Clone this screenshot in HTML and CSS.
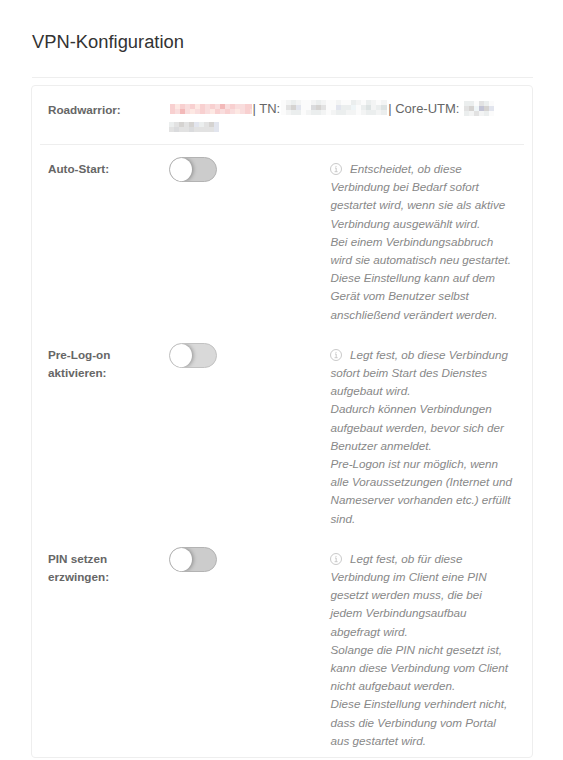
FILE: index.html
```html
<!DOCTYPE html>
<html lang="de">
<head>
<meta charset="UTF-8">
<meta name="viewport" content="width=device-width, initial-scale=1.0">
<title>VPN-Konfiguration</title>
<link rel="stylesheet" href="styles.css">
</head>
<body>

<div class="container">
    <h2>VPN-Konfiguration</h2>
    <div class="card">
        <div class="row connection">
            <div class="label">Roadwarrior:</div>
            <div class="value">
                <svg class="redacted name" width="82" height="10" data-cells="abacabacacdcaccaa|acdcbcacbacacbcac"></svg><span>| TN:</span>
                <svg class="redacted network" width="106" height="15" data-cells="wghgwwghgwwgwwhgwhgwgg|wijkwwmjiwwkhhlwhnghnn|wghhwghhgwghhggwghhghh"></svg><span>| Core-UTM:</span>
                <svg class="redacted utm" width="30" height="15" data-cells="hhwihw|ijlojk|hgighw"></svg>
                <svg class="redacted host" width="50" height="10" data-cells="hijijkhijk|imiimiiiik"></svg>
            </div>
        </div>
        <div class="row">
            <div class="label">Auto-Start:</div>
            <div class="toggle"></div>
            <div class="hint">
                <svg class="info" viewBox="0 0 12 12"><circle cx="6" cy="6" r="5.5"/><path d="M5 5h1.2v3.6M4.6 8.7h3M6 2.9v1"/></svg>Entscheidet, ob diese Verbindung bei Bedarf sofort gestartet wird, wenn sie als aktive Verbindung ausgewählt wird.<br>
                Bei einem Verbindungsabbruch wird sie automatisch neu gestartet.<br>
                Diese Einstellung kann auf dem Gerät vom Benutzer selbst anschließend verändert werden.
            </div>
        </div>
        <div class="row">
            <div class="label">Pre-Log-on<br>aktivieren:</div>
            <div class="toggle disabled"></div>
            <div class="hint">
                <svg class="info" viewBox="0 0 12 12"><circle cx="6" cy="6" r="5.5"/><path d="M5 5h1.2v3.6M4.6 8.7h3M6 2.9v1"/></svg>Legt fest, ob diese Verbindung sofort beim Start des Dienstes aufgebaut wird.<br>
                Dadurch können Verbindungen aufgebaut werden, bevor sich der Benutzer anmeldet.<br>
                Pre-Logon ist nur möglich, wenn alle Voraussetzungen (Internet und Nameserver vorhanden etc.) erfüllt sind.
            </div>
        </div>
        <div class="row">
            <div class="label">PIN setzen<br>erzwingen:</div>
            <div class="toggle"></div>
            <div class="hint">
                <svg class="info" viewBox="0 0 12 12"><circle cx="6" cy="6" r="5.5"/><path d="M5 5h1.2v3.6M4.6 8.7h3M6 2.9v1"/></svg>Legt fest, ob für diese Verbindung im Client eine PIN gesetzt werden muss, die bei jedem Verbindungsaufbau abgefragt wird.<br>
                Solange die PIN nicht gesetzt ist, kann diese Verbindung vom Client nicht aufgebaut werden.<br>
                Diese Einstellung verhindert nicht, dass die Verbindung vom Portal aus gestartet wird.
            </div>
        </div>
    </div>
</div>

<script src="script.js"></script>
</body>
</html>
```
FILE: styles.css
```css
body {
    font-family: "Liberation Sans", Arial, sans-serif;
    background-color: #fff;
    color: #666;
    margin: 0;
}
.container {
    width: 502px;
    margin-left: 31px;
    padding-top: 31px;
}
h2 {
    margin: 0 0 7px 1px;
    height: 46px;
    line-height: 21px;
    font-size: 18.35px;
    font-weight: normal;
    color: #333;
    border-bottom: 1px solid #eee;
}
.card {
    box-sizing: border-box;
    height: 673px;
    padding: 0 8px;
    border: 1px solid #eee;
    border-radius: 4px;
}
.row {
    display: grid;
    grid-template-columns: 121px 161.5px 184px;
    padding: 15px 0 7px 8px;
    font-size: 11.7px;
    line-height: 18.2px;
}
.connection {
    grid-template-columns: 121px 1fr;
    box-sizing: border-box;
    height: 59px;
    padding-top: 14px;
    border-bottom: 1px solid #eee;
}
.label {
    font-weight: bold;
}
.connection .label {
    padding-top: 1px;
}
.value {
    font-size: 13px;
    white-space: nowrap;
    display: flex;
    flex-wrap: wrap;
    align-content: flex-start;
}
.redacted {
    display: block;
}
.name {
    margin: 4px 0.5px 0 1px;
}
.network {
    margin: 0 1px;
}
.utm {
    margin: 1px 20px 0 4.5px;
}
.host {
    margin-top: 4px;
}
.toggle {
    box-sizing: border-box;
    width: 48px;
    height: 25px;
    margin-top: -3px;
    border: 1px solid #b3b3b3;
    border-radius: 13px;
    background-color: #ccc;
    overflow: hidden;
}
.toggle::before {
    content: "";
    display: block;
    width: 22px;
    height: 23px;
    border-radius: 50%;
    background: #fff;
    box-shadow: 1px 0 4px rgba(0, 0, 0, 0.35);
}
.toggle.disabled {
    background-color: #d9d9d9;
    border-color: #c2c2c2;
}
.hint {
    font-style: italic;
    color: #888;
}
.info {
    width: 12px;
    height: 12px;
    margin: 0 8px 0 -0.5px;
    vertical-align: -2px;
    fill: none;
    stroke: #bbb;
    stroke-width: 0.8;
}
```
FILE: script.js
```js
var colors = {
    a: "#f8d0d0", b: "#fde8e3", c: "#f9dddd", d: "#f3b9b9",
    g: "#f3f4f4", h: "#ebeeee", i: "#e2e2e2", j: "#d5d3d1",
    k: "#e2e5ee", l: "#eff5f7", m: "#dadbdd", n: "#dde3e3",
    o: "#c3c4d5", w: "#fbfbfb"
};

document.querySelectorAll(".redacted").forEach(function (svg) {
    svg.dataset.cells.split("|").forEach(function (row, y) {
        row.split("").forEach(function (key, x) {
            var rect = document.createElementNS("http://www.w3.org/2000/svg", "rect");
            rect.setAttribute("x", x * 5);
            rect.setAttribute("y", y * 5);
            rect.setAttribute("width", 5);
            rect.setAttribute("height", 5);
            rect.setAttribute("fill", colors[key]);
            svg.appendChild(rect);
        });
    });
});
```
